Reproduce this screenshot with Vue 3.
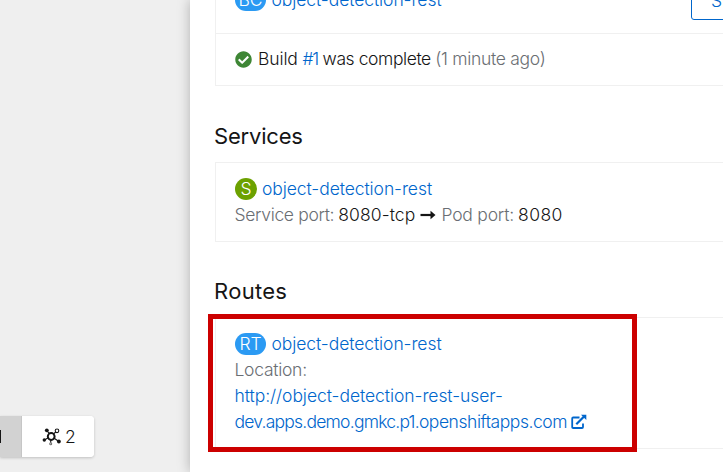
<script setup>
const url = ['http://object-detection-rest-user-', 'dev.apps.demo.gmkc.p1.', 'openshiftapps.com']
</script>

<template>
  <div class="page">
    <aside class="canvas">
      <div class="toolbar">
        <button class="tool active"><span class="edge"></span></button>
        <button class="tool second">
          <svg width="20" height="20" viewBox="0 0 20 20">
            <g stroke="#151515" stroke-width="1.1" fill="none">
              <path d="M9 9L4.800 3.300M9 9L15 4M9 9L2.500 13M9 9L16.500 14.300M8.700 10V16" />
              <circle cx="9.200" cy="9.500" r="3.400" fill="#fff" stroke-width="2" />
              <circle cx="15" cy="3.800" r="1.800" fill="#fff" />
              <circle cx="8.700" cy="16.800" r="1" fill="#fff" stroke="#777" />
            </g>
            <g fill="#151515"><circle cx="4.800" cy="3.300" r="1.900" /><circle cx="2.300" cy="13" r="1.700" /><circle cx="16.900" cy="14.500" r="1.900" /></g>
          </svg>
          <span>2</span>
        </button>
      </div>
    </aside>
    <main class="panel">
      <section class="card builds">
        <div class="build-head">
          <div class="line"><span class="badge blue">BC</span><a class="t-name">object-detection-rest</a></div>
          <button class="start">Start Build</button>
        </div>
        <div class="build-row line">
          <svg class="check" width="17" height="17" viewBox="0 0 512 512"><path fill="#3e8635" d="M504 256c0 137-111 248-248 248S8 393 8 256 119 8 256 8s248 111 248 248zM227.300 387.300l184-184c6.200-6.200 6.200-16.400 0-22.600l-22.600-22.600c-6.200-6.200-16.400-6.200-22.600 0L216 308.100l-70.100-70.100c-6.200-6.200-16.400-6.200-22.600 0l-22.600 22.600c-6.200 6.200-6.200 16.400 0 22.600l104 104c6.200 6.300 16.400 6.300 22.600.1z" /></svg>
          <span class="t-build">Build <a class="t-num">#1</a><span class="t-was"> was complete </span><i class="t-ago">(1 minute ago)</i></span>
        </div>
      </section>
      <h2 class="h-services">Services</h2>
      <section class="card padded">
        <div class="line"><span class="badge green">S</span><a class="t-name">object-detection-rest</a></div>
        <div class="line">
          <i class="t-port">Service port:</i><span class="t-tcp">8080-tcp</span>
          <svg class="arrow" width="16" height="10" viewBox="0 0 16 10"><path d="M0.500 5H11" stroke="#151515" stroke-width="2.200" /><path d="M10.500 0.700L15.500 5L10.500 9.300Z" fill="#151515" /></svg>
          <i class="t-pod">Pod port:</i><span class="t-num8080">8080</span>
        </div>
      </section>
      <h2 class="h-routes">Routes</h2>
      <section class="card padded route">
        <div class="line"><span class="badge blue">RT</span><a class="t-name">object-detection-rest</a></div>
        <div class="line"><i class="t-loc">Location:</i></div>
        <div class="line"><a class="t-url1">{{ url[0] }}</a></div>
        <div class="line">
          <a><span class="t-host">{{ url[1] }}</span><span class="t-domain">{{ url[2] }}</span></a>
          <svg class="ext" width="16" height="16" viewBox="0 0 16 16" fill="none" stroke="#06c"><path d="M8.500 3.500H2.200Q1.200 3.500 1.200 4.500V13.200Q1.200 14 2.200 14H11Q12 14 12 13V9.500" stroke-width="1.800" /><path d="M5.300 10.200L12.800 2.700" stroke-width="2.200" /><path d="M10 0.800H15.300V6.100Z" fill="#06c" stroke="none" /></svg>
        </div>
        <div class="highlight"></div>
      </section>
    </main>
  </div>
</template>

<style>
body { background: #fff; overflow: hidden; }
</style>

<style scoped>
.page { box-sizing: border-box; display: flex; width: 723px; height: 472px; overflow: hidden; background: #efefef; font-family: Inter, sans-serif; font-size: 17.5px; font-weight: 300; color: #151515; }
button { font: inherit; color: inherit; box-sizing: border-box; padding: 0; border: 0; }
i { font-style: normal; color: #6a6e73; }
a { color: #06c; }
.canvas { flex: 0 0 190px; display: flex; align-items: flex-end; padding-bottom: 15px; box-sizing: border-box; }
.toolbar { display: flex; height: 41px; width: 94px; border-radius: 0 4px 4px 0; background: #fff; box-shadow: 0 1px 3px #0003; overflow: hidden; }
.tool { display: flex; align-items: center; background: #fff; }
.active { width: 22px; background: #d2d2d2; border-right: 1px solid #c6c6c6; }
.edge { width: 1px; height: 13px; background: #151515; }
.second { width: 72px; padding-left: 19px; gap: 4px; }
.second svg { margin-left: 1px; margin-right: -1px; }
.panel { flex: 1; min-width: 0; padding-left: 25px; background: #fff; box-shadow: 0 0 12px #0004; display: flex; flex-direction: column; }
.card { box-sizing: border-box; width: 560px; flex: none; border: 1px solid #f0f0f0; position: relative; }
.builds { margin-top: -33px; height: 119px; }
.build-head { height: 66px; box-sizing: border-box; padding: 19px 0 0 19px; display: flex; border-bottom: 1px solid #f0f0f0; }
.start { margin-left: auto; margin-right: -30px; margin-top: -6px; width: 113px; height: 39px; border: 1px solid #06c; border-radius: 3px; background: #fff; color: #06c; text-align: left; padding-left: 19px; }
.line { display: flex; align-items: center; height: 26px; white-space: nowrap; line-height: 24px; }
.line > a, .line > i, .line > span:not(.badge) { line-height: 26px; }
.line > .t-build:not(.badge) { line-height: 24px; padding-bottom: 2px; }
.padded .line > a, .padded .line > i, .padded .line > span:not(.badge), .build-head .line > a { line-height: 24px; }
.build-row { height: 51px; padding-left: 19px; }
.check { margin-right: 6px; }
.badge { height: 22px; line-height: 22px; border-radius: 11px; color: #fff; text-align: center; }
.blue { width: 31px; margin-right: 5.5px; background: #2b9af3; }
.green { width: 22px; margin-right: 5px; background: #6ca100; }
.line > a, .padded .line > i, .padded .line > span:not(.badge) { padding-bottom: 1px; }
.t-name { letter-spacing: -0.08px; }
.t-build { letter-spacing: -0.12px; }
.t-num { letter-spacing: -1.5px; margin-right: 0.5px; }
.t-was { letter-spacing: -0.42px; }
.t-ago { letter-spacing: -0.3px; }
.t-port { letter-spacing: -0.34px; margin-left: -0.5px; margin-right: 4px; }
.t-tcp { letter-spacing: 0.12px; }
.t-pod { letter-spacing: -0.2px; margin-right: 4px; }
.t-num8080 { letter-spacing: 0.45px; }
.t-loc { letter-spacing: -0.27px; margin-left: -0.5px; }
.t-url1 { letter-spacing: -0.06px; margin-left: -0.5px; }
.t-host { letter-spacing: -0.77px; margin-left: -0.5px; }
.t-domain { letter-spacing: -0.45px; }
h2 { margin: 0; height: 76px; flex: none; box-sizing: border-box; padding-top: 35px; line-height: 30px; font-size: 22px; font-weight: 400; margin-left: -1px; }
.h-services { letter-spacing: -0.2px; }
.h-routes { height: 75px; padding-top: 34px; letter-spacing: 0.3px; }
.padded { padding: 13px 19px; }
.arrow { margin: 0 5px; }
.ext { margin-left: 4px; }
.highlight { position: absolute; left: -8px; top: -4px; width: 429px; height: 138px; box-sizing: border-box; border: 5px solid #c00; }
</style>
